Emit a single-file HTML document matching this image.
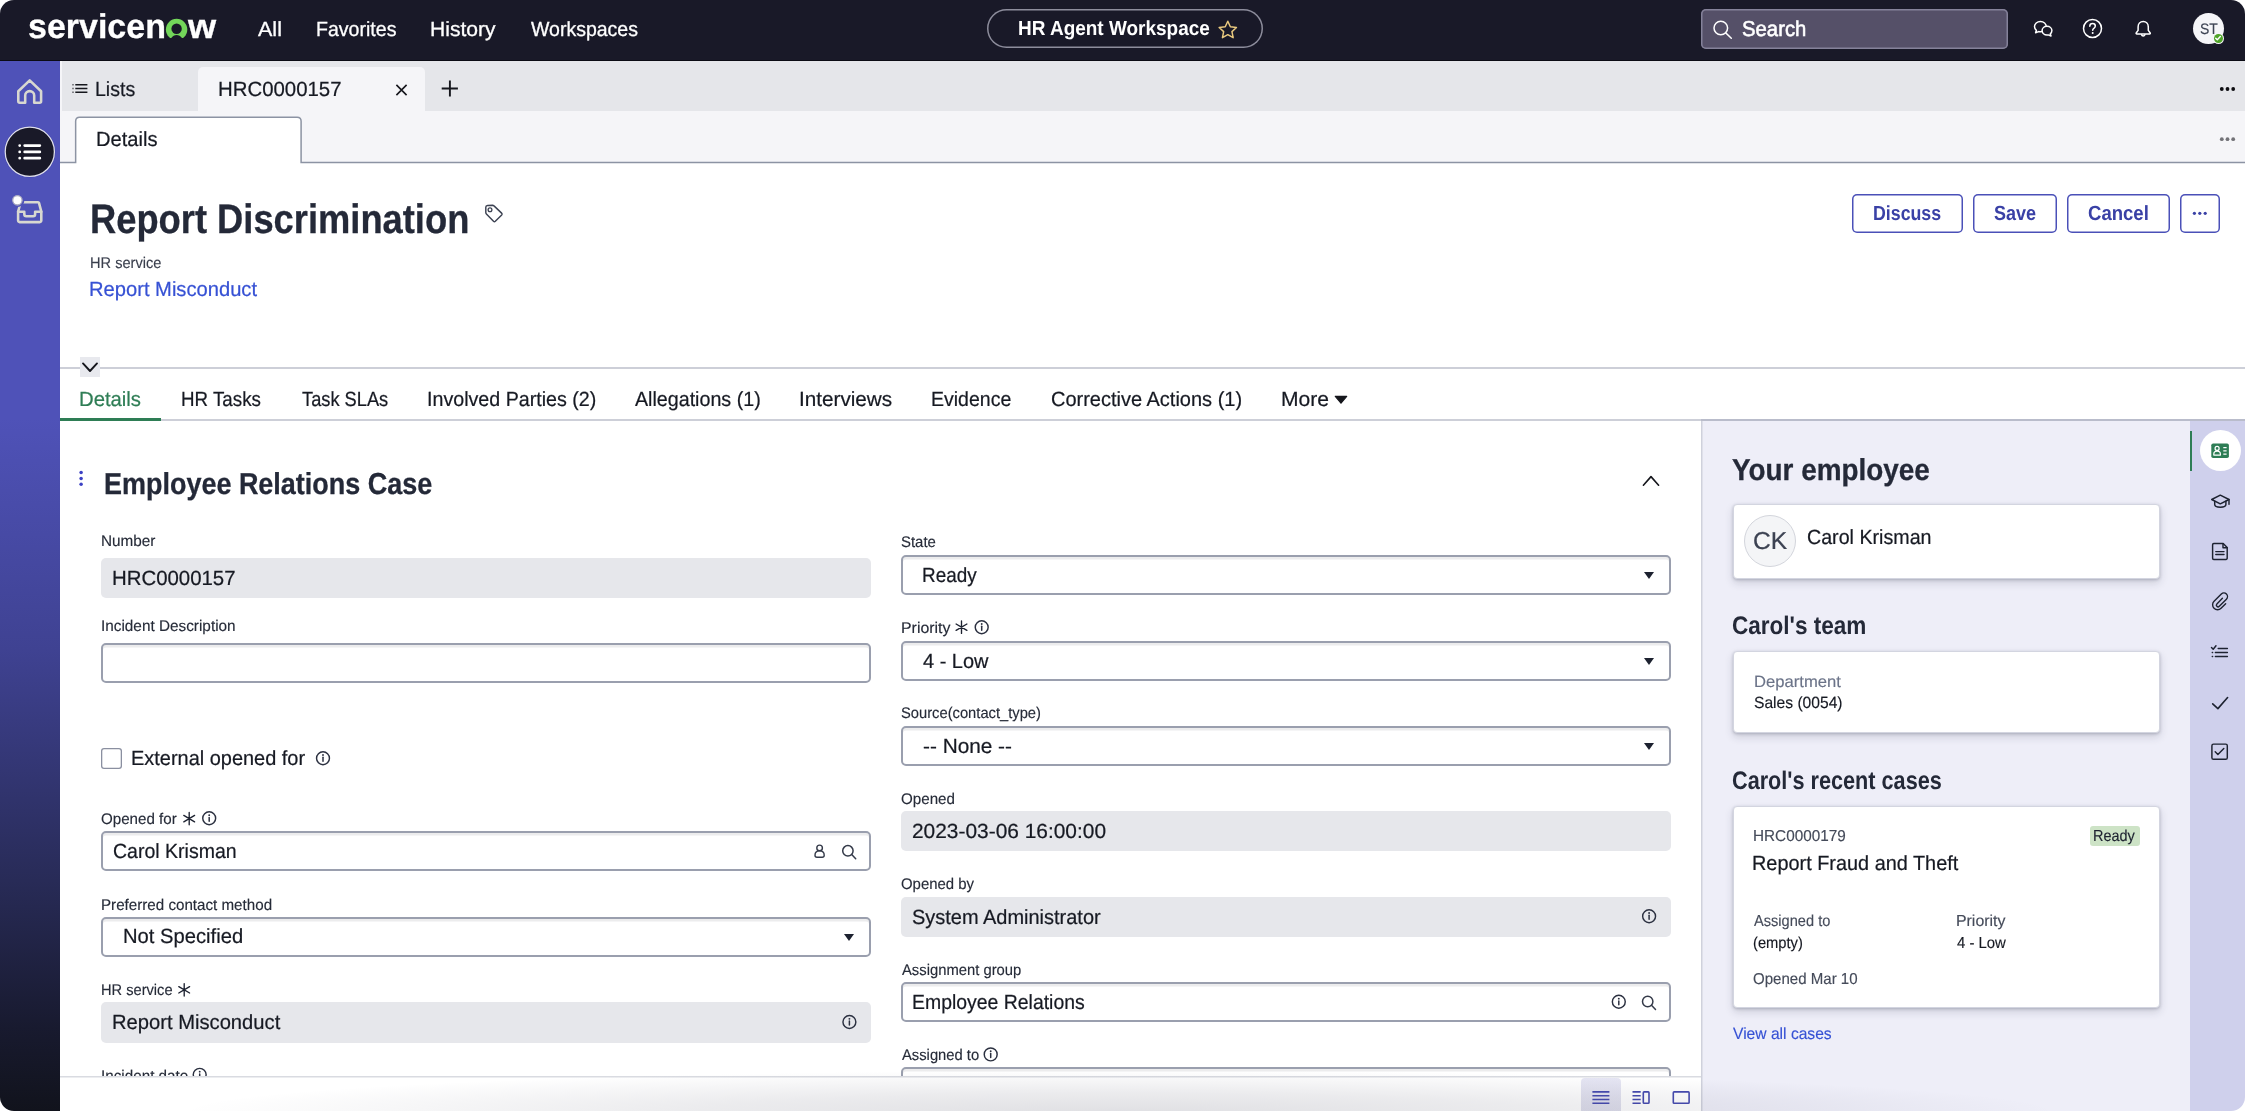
<!DOCTYPE html>
<html lang="en"><head><meta charset="utf-8"><title>HR Agent Workspace</title>
<style>
*{box-sizing:border-box;margin:0;padding:0}
html,body{width:2246px;height:1112px;background:#fff;overflow:hidden}
body{font-family:"Liberation Sans",sans-serif;color:#1d2230}
#pagebg{left:60px;top:61px;width:2186px;height:102px;background:#f5f5f8}
#app{will-change:transform;position:absolute;left:0;top:0;width:2245px;height:1111px;overflow:hidden;border-radius:14px;background:#fff}
.a{position:absolute}
.t{text-rendering:geometricPrecision;transform-origin:0 50%;position:absolute;white-space:nowrap;line-height:1;z-index:5}
svg{position:absolute;overflow:visible}
/* header */
#hdr{left:0;top:0;width:2246px;height:61px;background:#191928;border-bottom:1px solid #0b0b14}
#pill{left:987px;top:8.6px;width:276px;height:39.7px;box-shadow:inset 0 0 0 1.5px #8d8d9c;border-radius:20px}
#search{left:1701px;top:8.5px;width:306.5px;height:40.5px;background:#555068;box-shadow:inset 0 0 0 1.5px #85829a;border-radius:5px}
#avatar{left:2193.300px;top:13.400px;width:30.800px;height:30.800px;border-radius:50%;background:#f5f5f8}
#avdot{left:2213.600px;top:33.600px;width:9.400px;height:9.400px;border-radius:50%;background:#4fa428;box-shadow:0 0 0 1px #f5f5f8}
/* sidebar */
#side{left:0;top:61px;width:60px;height:1051px;background:linear-gradient(180deg,#4f52b8 0%,#4f52b8 34%,#3f4292 56%,#282b57 78%,#181a2f 92%,#11131c 100%)}
/* tab bar */
#tabbar{left:62px;top:61px;width:2184px;height:50px;background:#e5e6ea;box-shadow:0 1px 0 #ecedf0}
#tabact{left:198px;top:67px;width:227px;height:45px;background:#f5f5f8;border-radius:5px 5px 0 0}
#subbar{left:60px;top:111px;width:2186px;height:52px;background:#f5f5f8}
/* record header */
.btn{box-shadow:inset 0 0 0 1.5px #4a50b8;border-radius:5px;background:#fff;height:39.6px;top:193.6px}
#hline{left:60px;top:367px;width:2186px;height:2px;background:#cdcfd8}
#chev{left:80px;top:357px;width:20px;height:20px;background:#e8e9ee}
#tabline{left:60px;top:419px;width:2186px;height:2px;background:linear-gradient(90deg,#cdcfd8 0,#cdcfd8 1641px,#b9bccb 1641px)}
#tabul{left:60px;top:418px;width:101.2px;height:3px;background:#2e7d55}
/* form */
.ro{background:#e6e7eb;border-radius:5px;height:40px}
.in{background:#fff;border:2px solid #9a9fae;border-radius:5px;height:40px;box-shadow:inset 0 2.5px 0.5px rgba(30,36,50,.085)}
.L{left:101px;width:770px}
.R{left:901px;width:770px}
.caret{width:0;height:0;border-left:5.5px solid transparent;border-right:5.5px solid transparent;border-top:7px solid #1d2230}
#cb{left:101px;top:748px;width:20.500px;height:20.500px;border-radius:3px;background:#fff;box-shadow:inset 0 0 0 1.300px #8a8fa0}
/* bottom bar */
#bot{z-index:6;left:60px;top:1076px;width:1641px;height:36px;background:#fff;box-shadow:inset 0 1.500px 0 #d9dbe1}
#bothl{z-index:7;left:1581px;top:1078px;width:40px;height:34px;background:linear-gradient(180deg,#e6e6f4,#dfdfec);border-radius:4px 4px 0 0}
/* right panel */
#panel{left:1701px;top:420.500px;width:489px;height:692px;background:#eeeef8;box-shadow:inset 1.500px 0 0 #cfd1dc}
#rail{left:2190px;top:420.5px;width:56px;height:692px;background:#cfd0ec}
#railbar{left:2190px;top:431px;width:2px;height:40px;background:#2e7d55}
#railcirc{left:2199.600px;top:430.400px;width:41px;height:41px;border-radius:50%;background:#fff}
.card{background:#fff;border-radius:4px;border:1px solid #d3d5e0;box-shadow:0 1px 3px rgba(40,44,70,.24),0 4px 9px rgba(40,44,70,.16);left:1733px;width:426.5px}
#ck{left:1744.3px;top:515px;width:52px;height:52px;border-radius:50%;background:#f4f5f7;border:1px solid #d3d5dc}
#badge{left:2089.8px;top:826px;width:50px;height:20px;background:#cde3c6;border-radius:3px}
#vign{left:0;top:1070px;width:2246px;height:42px;background:radial-gradient(ellipse 940px 42px at 1120px 100%,rgba(35,35,60,.14) 0%,rgba(35,35,60,.09) 45%,rgba(35,35,60,0) 100%);pointer-events:none;z-index:9}

</style></head>
<body>
<div id="app">
<!-- header -->
<div class="a" id="hdr"></div>
<svg style="left:164px;top:16px" width="26" height="24" viewBox="164 16 26 24"><defs><clipPath id="oc"><rect x="160" y="10" width="34" height="27.900"/></clipPath></defs><g clip-path="url(#oc)"><circle cx="176.600" cy="29.500" r="10.700" fill="#73d65a"/><circle cx="176.600" cy="28.700" r="5.200" fill="#191928"/><path d="M170.900 38.500C172.300 36.300 174.300 35 176.600 35s4.300 1.300 5.700 3.500Z" fill="#191928"/></g></svg>
<div class="a" id="pill"></div>
<svg style="left:1217px;top:19px" width="22" height="22" viewBox="1217 19 22 22"><path d="M1227.8 21.2l2.55 5.6 6.1 0.7-4.5 4.15 1.2 6.05-5.35-3.05-5.35 3.05 1.2-6.05-4.5-4.15 6.1-0.7z" fill="none" stroke="#e9c97f" stroke-width="1.5" stroke-linejoin="round"/></svg>
<div class="a" id="search"></div>
<svg style="left:1710px;top:18px" width="26" height="26" viewBox="1710 18 26 26"><circle cx="1720.800" cy="28" r="6.800" fill="none" stroke="#fff" stroke-width="1.500"/><path d="M1725.700 32.900l5.600 5.300" stroke="#fff" stroke-width="1.500" stroke-linecap="round"/></svg>
<!-- chat -->
<svg style="left:2032px;top:19px" width="24" height="22" viewBox="2032 19 24 22"><path d="M2040.400 21.500c-3.300 0-5.900 2.300-5.900 5.100 0 1.500 0.700 2.800 1.900 3.800l-0.800 2.300 3-1.100c0.600 0.100 1.200 0.200 1.800 0.200 3.300 0 5.900-2.300 5.900-5.200s-2.600-5.100-5.900-5.100z" fill="#191928" stroke="#fff" stroke-width="1.500" stroke-linejoin="round"/><path d="M2047 26.200c2.700 0 4.900 1.900 4.900 4.400 0 1.300-0.600 2.400-1.600 3.200l0.700 2.200-2.700-1.100c-0.400 0.100-0.900 0.150-1.300 0.150-2.700 0-4.900-2-4.900-4.450s2.200-4.400 4.900-4.400z" fill="#191928" stroke="#fff" stroke-width="1.500" stroke-linejoin="round"/></svg>
<!-- help -->
<svg style="left:2081px;top:17px" width="24" height="24" viewBox="2081 17 24 24"><circle cx="2092.5" cy="28.500" r="9" fill="none" stroke="#fff" stroke-width="1.5"/><path d="M2089.800 26.200c0-1.600 1.200-2.700 2.800-2.700s2.700 1 2.700 2.400c0 1.200-0.700 1.800-1.500 2.400-0.700 0.500-1.100 0.900-1.100 1.900" fill="none" stroke="#fff" stroke-width="1.5" stroke-linecap="round"/><circle cx="2092.700" cy="33" r="1" fill="#fff"/></svg>
<!-- bell -->
<svg style="left:2132px;top:18px" width="22" height="22" viewBox="2132 18 22 22"><path d="M2143.200 21.600c-3 0-5.100 2.300-5.100 5.300v3.500l-1.900 2.600c-0.300 0.500 0 1 0.600 1h12.800c0.600 0 0.900-0.500 0.600-1l-1.900-2.600v-3.500c0-3-2.100-5.300-5.100-5.300z" fill="none" stroke="#fff" stroke-width="1.500" stroke-linejoin="round"/><path d="M2141.500 34.800a1.800 1.800 0 0 0 3.400 0" fill="none" stroke="#fff" stroke-width="1.500" stroke-linecap="round"/></svg>
<div class="a" id="avatar"></div>
<div class="a" id="avdot"></div>
<svg style="left:2213.300px;top:33.400px" width="10" height="10" viewBox="0 0 10 10"><path d="M2.700 5.200l1.600 1.600 3-3.300" fill="none" stroke="#fff" stroke-width="1.400" stroke-linecap="round" stroke-linejoin="round"/></svg>

<!-- sidebar -->
<div class="a" id="side"></div>
<svg style="left:14px;top:76px" width="32" height="32" viewBox="14 76 32 32"><path d="M18.300 91.200L29.700 80.400 41.100 91.200V101.200a1.500 1.500 0 0 1-1.500 1.500H34.200V95.600a4.500 4.500 0 0 0-9 0V102.700H19.800a1.500 1.500 0 0 1-1.500-1.500Z" fill="none" stroke="#d8d8d0" stroke-width="2.550" stroke-linecap="round" stroke-linejoin="round"/></svg>
<svg style="left:0px;top:120px" width="60" height="64" viewBox="0 120 60 64"><circle cx="29.800" cy="151.800" r="25.700" fill="#4145ae"/><circle cx="29.800" cy="151.800" r="24.600" fill="#191928" stroke="#dedeea" stroke-width="1.300"/><g stroke="#fff" stroke-width="2.800" stroke-linecap="round"><path d="M24.700 145.600H39.800M24.700 151.900H39.800M24.700 158.200H39.800"/><path d="M19.700 145.600h0.010M19.700 151.900h0.010M19.700 158.200h0.010"/></g></svg>
<svg style="left:10px;top:192px" width="36" height="34" viewBox="10 192 36 34"><path d="M21.500 202.200H38a1 1 0 0 1 1 0.700L41.300 211.600V220.600a1.500 1.500 0 0 1-1.500 1.500H19.600a1.500 1.500 0 0 1-1.500-1.500V211.600L20.500 203" fill="none" stroke="#d8d8d0" stroke-width="2.550" stroke-linecap="round" stroke-linejoin="round"/><path d="M18.100 211.800H24.300V214.300a2 2 0 0 0 2 2H33.100a2 2 0 0 0 2-2V211.800H41.300" fill="none" stroke="#d8d8d0" stroke-width="2.550" stroke-linecap="round" stroke-linejoin="round"/><circle cx="17.500" cy="200.200" r="6.900" fill="#4f52b8"/><circle cx="17.400" cy="200.300" r="4.700" fill="#fff" stroke="#a9a9c0" stroke-width="1.300"/></svg>

<!-- tab bar -->
<div class="a" id="pagebg"></div>
<div class="a" id="tabbar"></div>
<div class="a" id="tabact"></div>
<svg style="left:70px;top:80px" width="20" height="18" viewBox="70 80 20 18"><g stroke="#15161c" stroke-width="1.600"><path d="M75.300 84.800H87.400M75.300 88.550H87.400M75.300 92.300H87.400"/><path d="M72.200 84.800H73.800M72.200 88.550H73.800M72.200 92.300H73.800" opacity=".6"/></g></svg>
<svg style="left:392px;top:80px" width="18" height="18" viewBox="392 80 18 18"><path d="M396.400 84.900L406.600 95.100M406.600 84.900L396.400 95.100" stroke="#15161c" stroke-width="1.600"/></svg>
<svg style="left:438px;top:78px" width="24" height="22" viewBox="438 78 24 22"><path d="M441.700 88.500H457.900M449.900 80.600V96.500" stroke="#15161c" stroke-width="1.900"/></svg>
<svg style="left:2218px;top:84px" width="20" height="10" viewBox="2218 84 20 10"><g fill="#0c0c10"><circle cx="2221.800" cy="89" r="1.900"/><circle cx="2227.500" cy="89" r="1.900"/><circle cx="2233.200" cy="89" r="1.900"/></g></svg>
<div class="a" id="subbar"></div>
<svg style="left:60px;top:111px" width="2186" height="56" viewBox="60 111 2186 56"><path d="M60 162.500H75.650V121.250Q75.650 117.250 79.650 117.250H297.100Q301.100 117.250 301.100 121.250V162.500H2246V167H60Z" fill="#fff"/><path d="M60 162.500H75.650V121.250Q75.650 117.250 79.650 117.250H297.100Q301.100 117.250 301.100 121.250V162.500H2246" fill="none" stroke="#8c93a3" stroke-width="1.500"/></svg>
<svg style="left:2218px;top:134px" width="20" height="10" viewBox="2218 134 20 10"><g fill="#727277"><circle cx="2221.800" cy="139.200" r="1.900"/><circle cx="2227.500" cy="139.200" r="1.900"/><circle cx="2233.200" cy="139.200" r="1.900"/></g></svg>

<!-- record header -->
<svg style="left:482px;top:202px" width="24" height="24" viewBox="482 202 24 24"><path d="M485.800 207.300Q485.800 205.500 487.600 205.450L492.600 205.300Q493.400 205.300 494 205.900L501.600 213.100Q502.600 214.050 501.700 215L495.300 221.300Q494.400 222.100 493.500 221.200L486.400 214Q485.800 213.400 485.800 212.600Z" fill="none" stroke="#3c4252" stroke-width="1.450" stroke-linejoin="round"/><circle cx="490" cy="209.700" r="1.900" fill="none" stroke="#3c4252" stroke-width="1.300"/></svg>
<div class="a btn" style="left:1852px;width:110.500px"></div>
<div class="a btn" style="left:1972.500px;width:84px"></div>
<div class="a btn" style="left:2067px;width:102.500px"></div>
<div class="a btn" style="left:2180px;width:40px"></div>
<svg style="left:2190px;top:208px" width="20" height="10" viewBox="2190 208 20 10"><g fill="#3a41a6"><circle cx="2194.400" cy="213.300" r="1.600"/><circle cx="2199.800" cy="213.300" r="1.600"/><circle cx="2205.200" cy="213.300" r="1.600"/></g></svg>
<div class="a" id="hline"></div>
<div class="a" id="chev"></div>
<svg style="left:80px;top:357px" width="20" height="20" viewBox="80 357 20 20"><path d="M83 363.400L90 371 97 363.400" fill="none" stroke="#15161c" stroke-width="1.900" stroke-linecap="round" stroke-linejoin="round"/></svg>
<div class="a" id="tabline"></div>
<div class="a" id="tabul"></div>
<svg style="left:1332px;top:394px" width="18" height="12" viewBox="1332 394 18 12"><path d="M1335.300 396.300H1346.700L1341 403.200Z" fill="#15161c" stroke="#15161c" stroke-width="1.200" stroke-linejoin="round"/></svg>

<!-- form -->
<svg style="left:78px;top:468px" width="8" height="20" viewBox="78 468 8 20"><g fill="#3c41c4"><circle cx="81.100" cy="472.500" r="1.750"/><circle cx="81.100" cy="478.400" r="1.750"/><circle cx="81.100" cy="484.300" r="1.750"/></g></svg>
<svg style="left:1640px;top:472px" width="22" height="16" viewBox="1640 472 22 16"><path d="M1643.400 485.200L1651 476.600 1658.600 485.200" fill="none" stroke="#15161c" stroke-width="1.600" stroke-linecap="round" stroke-linejoin="round"/></svg>

<div class="a ro L" style="top:558px"></div>
<div class="a in L" style="top:643px"></div>
<div class="a" id="cb"></div>
<div class="a in L" style="top:831px"></div>
<div class="a in L" style="top:917px"></div>
<div class="a ro L" style="top:1002px;height:40.500px"></div>

<div class="a in R" style="top:555px"></div>
<div class="a in R" style="top:641px"></div>
<div class="a in R" style="top:726px"></div>
<div class="a ro R" style="top:811px"></div>
<div class="a ro R" style="top:897px"></div>
<div class="a in R" style="top:982px"></div>
<div class="a in R" style="top:1067px"></div>

<div class="a caret" style="left:844.300px;top:934px"></div>
<div class="a caret" style="left:1644.100px;top:572px"></div>
<div class="a caret" style="left:1644.100px;top:657.500px"></div>
<div class="a caret" style="left:1644.100px;top:743px"></div>

<svg style="left:0;top:0" width="2246" height="1112" viewBox="0 0 2246 1112">
<defs>
<g id="info"><circle cx="0" cy="0" r="6.450" fill="none" stroke="#2b3040" stroke-width="1.450"/><path d="M0 -0.900V3" stroke="#2b3040" stroke-width="1.500" stroke-linecap="round"/><circle cx="0" cy="-3.150" r="0.950" fill="#2b3040"/></g>
<g id="ast" stroke="#1d2230" stroke-width="1.350" stroke-linecap="round"><path d="M0 -6.200V6.200M-5.400 -3.200L5.400 3.200M-5.400 3.200L5.400 -3.200"/></g>
<g id="mag" fill="none" stroke="#343a49" stroke-width="1.500" stroke-linecap="round"><circle cx="-1.300" cy="-1.200" r="5.200"/><path d="M2.500 2.600L6.500 6.700"/></g>
</defs>
<use href="#info" x="323" y="758.200"/>
<use href="#info" x="209.200" y="818.300"/>
<use href="#info" x="849.400" y="1022"/>
<use href="#info" x="199.700" y="1074.800"/>
<use href="#info" x="981.700" y="627.200"/>
<use href="#info" x="1649.100" y="916.200"/>
<use href="#info" x="1618.800" y="1001.800"/>
<use href="#info" x="990.700" y="1054.400"/>
<use href="#ast" x="189.200" y="818.600"/>
<use href="#ast" x="184.200" y="989.800"/>
<use href="#ast" x="961.500" y="627.200"/>
<use href="#mag" x="849.200" y="852"/>
<use href="#mag" x="1649" y="1002.700"/>
<g fill="none" stroke="#343a49" stroke-width="1.400" stroke-linejoin="round"><circle cx="819.600" cy="847.900" r="2.800"/><path d="M815 855.200C815 852.600 817 850.900 819.600 850.900S824.200 852.600 824.200 855.200C824.200 856.600 823.400 857.200 822.200 857.200H817C815.800 857.200 815 856.600 815 855.200Z"/></g>
</svg>

<!-- bottom bar -->
<div class="a" id="bot"></div>
<div class="a" id="bothl"></div>
<svg style="left:1588px;top:1088px;z-index:8" width="106" height="20" viewBox="1588 1088 106 20"><g stroke="#464bb0" stroke-width="1.600" fill="none"><path d="M1592.400 1091.900H1609.400M1592.400 1095.700H1609.400M1592.400 1099.500H1609.400M1592.400 1103.300H1609.400"/><path d="M1632.500 1091.900H1640.700M1632.500 1095.700H1640.700M1632.500 1099.500H1640.700M1632.500 1103.300H1640.700"/><rect x="1643.300" y="1091.900" width="5.700" height="11.400" rx=".8"/><rect x="1673.300" y="1091.900" width="15.800" height="11.400" rx=".8"/></g></svg>

<!-- right panel -->
<div class="a" id="panel"></div>
<div class="a" id="rail"></div>
<div class="a" id="railbar"></div>
<div class="a" id="railcirc"></div>
<div class="a card" style="top:504px;height:74.500px"></div>
<div class="a" id="ck"></div>
<div class="a card" style="top:651.200px;height:82px"></div>
<div class="a card" style="top:806.200px;height:201.400px"></div>
<div class="a" id="badge"></div>
<svg style="left:2190px;top:425px" width="56" height="350" viewBox="2190 425 56 350">
<rect x="2211.300" y="443.400" width="17.600" height="14.700" rx="1.800" fill="#2e7d55"/>
<g fill="none" stroke="#fff" stroke-width="1.250"><circle cx="2217.100" cy="448.400" r="2"/><path d="M2213.800 455v-0.800c0-1.900 1.400-3 3.300-3s3.300 1.100 3.300 3v0.800Z" stroke-linejoin="round"/><path d="M2223.300 447.600h3.300M2223.300 450.800h3.300M2223.300 454h3.300"/></g>
<g fill="none" stroke="#1d2230" stroke-width="1.450" stroke-linejoin="round" stroke-linecap="round">
<path d="M2211.700 499.500L2220.300 495.200 2229 499.500 2220.300 503.800Z"/><path d="M2214.700 501.300V504.600c0 1.600 2.500 2.700 5.600 2.700s5.600-1.100 5.600-2.700V501.300"/><path d="M2229 499.500V504.300"/>
<path d="M2213.800 543.500H2223.200L2227.200 547.500V558.200a1.200 1.200 0 0 1-1.200 1.200H2213.800a1.200 1.200 0 0 1-1.200-1.200V544.700a1.200 1.200 0 0 1 1.200-1.200Z"/><path d="M2223 543.700V547.700H2227"/><path d="M2215.800 551.600H2224M2215.800 554.500H2224"/>
<path transform="translate(2221.200 601.200) rotate(45)" d="M4.950 -1.340V5.150A4.950 4.950 0 0 1 -4.950 5.150V-5.150A3.600 3.600 0 0 1 2.250 -5.150V4.960A1.700 1.700 0 0 1 -1.150 4.960V-2.860" stroke-width="1.400"/>
<path d="M2218.200 648.400H2227.400M2215.400 652.500H2227.400M2215.400 656.500H2227.400"/><path d="M2212.300 652.500h0.300M2212.300 656.500h0.300"/><path d="M2211.500 647.600l1.700 1.700 2.800-3.500"/>
<path d="M2212.700 703.800L2217.900 708.600 2227.600 697.500" stroke-width="1.600"/>
<rect x="2211.900" y="744.100" width="15.400" height="15.200" rx="1.600"/><path d="M2215.200 751.800l2.700 2.700 5.900-6"/>
</g></svg>
<div class="a" id="vign"></div>

<span class="t" style="left:28.43px;top:10px;font-size:34.2px;color:#fff;font-weight:700;transform:scaleX(0.9938);-webkit-text-stroke:0.3px #fff;">servicen</span>
<span class="t" style="left:187.83px;top:10px;font-size:34.2px;color:#fff;font-weight:700;transform:scaleX(1.0584);-webkit-text-stroke:0.3px #fff;">w</span>
<span class="t" style="left:257.59px;top:20px;font-size:20.54px;color:#fff;transform:scaleX(1.0478);-webkit-text-stroke:0.3px #fff;">All</span>
<span class="t" style="left:315.76px;top:20px;font-size:20.54px;color:#fff;transform:scaleX(0.9526);-webkit-text-stroke:0.3px #fff;">Favorites</span>
<span class="t" style="left:429.85px;top:20px;font-size:20.54px;color:#fff;transform:scaleX(1.0260);-webkit-text-stroke:0.3px #fff;">History</span>
<span class="t" style="left:531.08px;top:20px;font-size:20.54px;color:#fff;transform:scaleX(0.9499);-webkit-text-stroke:0.3px #fff;">Workspaces</span>
<span class="t" style="left:1017.59px;top:19px;font-size:20.54px;color:#fff;font-weight:700;transform:scaleX(0.9237);">HR Agent Workspace</span>
<span class="t" style="left:1742.38px;top:19px;font-size:21.5px;color:#fff;transform:scaleX(0.9444);-webkit-text-stroke:0.55px #fff;">Search</span>
<span class="t" style="left:2199.68px;top:22px;font-size:15.16px;color:#3c4252;transform:scaleX(0.9226);-webkit-text-stroke:0.15px #3c4252;">ST</span>
<span class="t" style="left:94.69px;top:80px;font-size:20.54px;color:#161922;transform:scaleX(0.9513);-webkit-text-stroke:0.22px #161922;">Lists</span>
<span class="t" style="left:217.72px;top:80px;font-size:20.54px;color:#161922;transform:scaleX(0.9928);-webkit-text-stroke:0.22px #161922;">HRC0000157</span>
<span class="t" style="left:96.14px;top:130px;font-size:20.54px;color:#161922;transform:scaleX(0.9798);-webkit-text-stroke:0.22px #161922;">Details</span>
<span class="t" style="left:90.37px;top:199px;font-size:41.08px;color:#242938;font-weight:700;transform:scaleX(0.8840);-webkit-text-stroke:0.3px #242938;">Report Discrimination</span>
<span class="t" style="left:89.85px;top:256px;font-size:15.45px;color:#3a3f4d;transform:scaleX(0.9451);-webkit-text-stroke:0.15px #3a3f4d;">HR service</span>
<span class="t" style="left:89.44px;top:280px;font-size:20.54px;color:#3651d4;transform:scaleX(0.9817);-webkit-text-stroke:0.22px #3651d4;">Report Misconduct</span>
<span class="t" style="left:1873.38px;top:204px;font-size:20.54px;color:#3a41a6;font-weight:700;transform:scaleX(0.8652);">Discuss</span>
<span class="t" style="left:1994.03px;top:204px;font-size:20.54px;color:#3a41a6;font-weight:700;transform:scaleX(0.8767);">Save</span>
<span class="t" style="left:2088.35px;top:204px;font-size:20.54px;color:#3a41a6;font-weight:700;transform:scaleX(0.9037);">Cancel</span>
<span class="t" style="left:79.43px;top:390px;font-size:20.54px;color:#2e7d55;transform:scaleX(0.9881);-webkit-text-stroke:0.22px #2e7d55;">Details</span>
<span class="t" style="left:181.05px;top:390px;font-size:20.54px;color:#161922;transform:scaleX(0.9134);-webkit-text-stroke:0.22px #161922;">HR Tasks</span>
<span class="t" style="left:301.56px;top:390px;font-size:20.54px;color:#161922;transform:scaleX(0.8891);-webkit-text-stroke:0.22px #161922;">Task SLAs</span>
<span class="t" style="left:427.05px;top:390px;font-size:20.54px;color:#161922;transform:scaleX(0.9575);-webkit-text-stroke:0.22px #161922;">Involved Parties (2)</span>
<span class="t" style="left:635.30px;top:390px;font-size:20.54px;color:#161922;transform:scaleX(0.9577);-webkit-text-stroke:0.22px #161922;">Allegations (1)</span>
<span class="t" style="left:798.95px;top:390px;font-size:20.54px;color:#161922;transform:scaleX(1.0075);-webkit-text-stroke:0.22px #161922;">Interviews</span>
<span class="t" style="left:931.29px;top:390px;font-size:20.54px;color:#161922;transform:scaleX(0.9506);-webkit-text-stroke:0.22px #161922;">Evidence</span>
<span class="t" style="left:1051.05px;top:390px;font-size:20.54px;color:#161922;transform:scaleX(0.9736);-webkit-text-stroke:0.22px #161922;">Corrective Actions (1)</span>
<span class="t" style="left:1280.96px;top:390px;font-size:20.54px;color:#161922;transform:scaleX(1.0253);-webkit-text-stroke:0.22px #161922;">More</span>
<span class="t" style="left:103.98px;top:470px;font-size:30.32px;color:#242938;font-weight:700;transform:scaleX(0.8897);-webkit-text-stroke:0.3px #242938;">Employee Relations Case</span>
<span class="t" style="left:100.79px;top:534px;font-size:15.45px;color:#262b38;transform:scaleX(0.9911);-webkit-text-stroke:0.15px #262b38;">Number</span>
<span class="t" style="left:112.02px;top:569px;font-size:20.54px;color:#161922;transform:scaleX(0.9928);-webkit-text-stroke:0.22px #161922;">HRC0000157</span>
<span class="t" style="left:100.64px;top:619px;font-size:15.45px;color:#262b38;transform:scaleX(0.9927);-webkit-text-stroke:0.15px #262b38;">Incident Description</span>
<span class="t" style="left:131.15px;top:749px;font-size:20.54px;color:#161922;transform:scaleX(0.9713);-webkit-text-stroke:0.22px #161922;">External opened for</span>
<span class="t" style="left:101.37px;top:812px;font-size:15.45px;color:#262b38;transform:scaleX(0.9801);-webkit-text-stroke:0.15px #262b38;">Opened for</span>
<span class="t" style="left:112.57px;top:842px;font-size:20.54px;color:#161922;transform:scaleX(0.9502);-webkit-text-stroke:0.22px #161922;">Carol Krisman</span>
<span class="t" style="left:100.80px;top:898px;font-size:15.45px;color:#262b38;transform:scaleX(0.9820);-webkit-text-stroke:0.15px #262b38;">Preferred contact method</span>
<span class="t" style="left:122.53px;top:927px;font-size:20.54px;color:#161922;transform:scaleX(0.9837);-webkit-text-stroke:0.22px #161922;">Not Specified</span>
<span class="t" style="left:100.84px;top:983px;font-size:15.45px;color:#262b38;transform:scaleX(0.9479);-webkit-text-stroke:0.15px #262b38;">HR service</span>
<span class="t" style="left:112.03px;top:1013px;font-size:20.54px;color:#161922;transform:scaleX(0.9829);-webkit-text-stroke:0.22px #161922;">Report Misconduct</span>
<span class="t" style="left:100.65px;top:1069px;font-size:15.45px;color:#262b38;transform:scaleX(0.9869);-webkit-text-stroke:0.15px #262b38;">Incident date</span>
<span class="t" style="left:900.70px;top:535px;font-size:15.45px;color:#262b38;transform:scaleX(0.9675);-webkit-text-stroke:0.15px #262b38;">State</span>
<span class="t" style="left:922.04px;top:566px;font-size:20.54px;color:#161922;transform:scaleX(0.9203);-webkit-text-stroke:0.22px #161922;">Ready</span>
<span class="t" style="left:900.54px;top:621px;font-size:15.45px;color:#262b38;transform:scaleX(1.0288);-webkit-text-stroke:0.15px #262b38;">Priority</span>
<span class="t" style="left:923.04px;top:652px;font-size:20.54px;color:#161922;transform:scaleX(0.9732);-webkit-text-stroke:0.22px #161922;">4 - Low</span>
<span class="t" style="left:900.72px;top:706px;font-size:15.45px;color:#262b38;transform:scaleX(0.9539);-webkit-text-stroke:0.15px #262b38;">Source(contact_type)</span>
<span class="t" style="left:922.50px;top:737px;font-size:20.54px;color:#161922;transform:scaleX(1.0129);-webkit-text-stroke:0.22px #161922;">-- None --</span>
<span class="t" style="left:901.17px;top:792px;font-size:15.45px;color:#262b38;transform:scaleX(0.9816);-webkit-text-stroke:0.15px #262b38;">Opened</span>
<span class="t" style="left:912.32px;top:822px;font-size:20.54px;color:#161922;transform:scaleX(1.0176);-webkit-text-stroke:0.22px #161922;">2023-03-06 16:00:00</span>
<span class="t" style="left:901.18px;top:877px;font-size:15.45px;color:#262b38;transform:scaleX(0.9660);-webkit-text-stroke:0.15px #262b38;">Opened by</span>
<span class="t" style="left:912.13px;top:908px;font-size:20.54px;color:#161922;transform:scaleX(0.9726);-webkit-text-stroke:0.22px #161922;">System Administrator</span>
<span class="t" style="left:901.60px;top:963px;font-size:15.45px;color:#262b38;transform:scaleX(0.9588);-webkit-text-stroke:0.15px #262b38;">Assignment group</span>
<span class="t" style="left:911.90px;top:993px;font-size:20.54px;color:#161922;transform:scaleX(0.9458);-webkit-text-stroke:0.22px #161922;">Employee Relations</span>
<span class="t" style="left:901.60px;top:1048px;font-size:15.45px;color:#262b38;transform:scaleX(0.9568);-webkit-text-stroke:0.15px #262b38;">Assigned to</span>
<span class="t" style="left:1731.86px;top:456px;font-size:30.32px;color:#242938;font-weight:700;transform:scaleX(0.9200);-webkit-text-stroke:0.3px #242938;">Your employee</span>
<span class="t" style="left:1753.27px;top:530px;font-size:24.45px;color:#3c4252;transform:scaleX(1.0084);-webkit-text-stroke:0.22px #3c4252;">CK</span>
<span class="t" style="left:1806.87px;top:528px;font-size:20.54px;color:#161922;transform:scaleX(0.9573);-webkit-text-stroke:0.22px #161922;">Carol Krisman</span>
<span class="t" style="left:1731.95px;top:614px;font-size:25.43px;color:#242938;font-weight:700;transform:scaleX(0.8866);">Carol's team</span>
<span class="t" style="left:1753.68px;top:674px;font-size:16.23px;color:#6b7388;transform:scaleX(1.0250);-webkit-text-stroke:0.15px #6b7388;">Department</span>
<span class="t" style="left:1753.94px;top:695px;font-size:16.23px;color:#161922;transform:scaleX(0.9628);-webkit-text-stroke:0.15px #161922;">Sales (0054)</span>
<span class="t" style="left:1731.99px;top:769px;font-size:25.43px;color:#242938;font-weight:700;transform:scaleX(0.8517);">Carol's recent cases</span>
<span class="t" style="left:1752.59px;top:829px;font-size:15.84px;color:#454b5a;transform:scaleX(0.9667);-webkit-text-stroke:0.15px #454b5a;">HRC0000179</span>
<span class="t" style="left:2093.46px;top:829px;font-size:15.84px;color:#1d2230;transform:scaleX(0.9141);-webkit-text-stroke:0.15px #1d2230;">Ready</span>
<span class="t" style="left:1752.26px;top:854px;font-size:20.54px;color:#161922;transform:scaleX(0.9682);-webkit-text-stroke:0.22px #161922;">Report Fraud and Theft</span>
<span class="t" style="left:1753.61px;top:914px;font-size:15.84px;color:#454b5a;transform:scaleX(0.9227);-webkit-text-stroke:0.15px #454b5a;">Assigned to</span>
<span class="t" style="left:1752.82px;top:936px;font-size:15.84px;color:#161922;transform:scaleX(0.9296);-webkit-text-stroke:0.15px #161922;">(empty)</span>
<span class="t" style="left:1955.84px;top:914px;font-size:15.84px;color:#454b5a;transform:scaleX(1.0028);-webkit-text-stroke:0.15px #454b5a;">Priority</span>
<span class="t" style="left:1956.75px;top:936px;font-size:15.84px;color:#161922;transform:scaleX(0.9418);-webkit-text-stroke:0.15px #161922;">4 - Low</span>
<span class="t" style="left:1753.17px;top:972px;font-size:15.84px;color:#454b5a;transform:scaleX(0.9509);-webkit-text-stroke:0.15px #454b5a;">Opened Mar 10</span>
<span class="t" style="left:1733.20px;top:1026px;font-size:16.23px;color:#3651d4;transform:scaleX(0.9630);-webkit-text-stroke:0.15px #3651d4;">View all cases</span>
</div>
</body></html>
